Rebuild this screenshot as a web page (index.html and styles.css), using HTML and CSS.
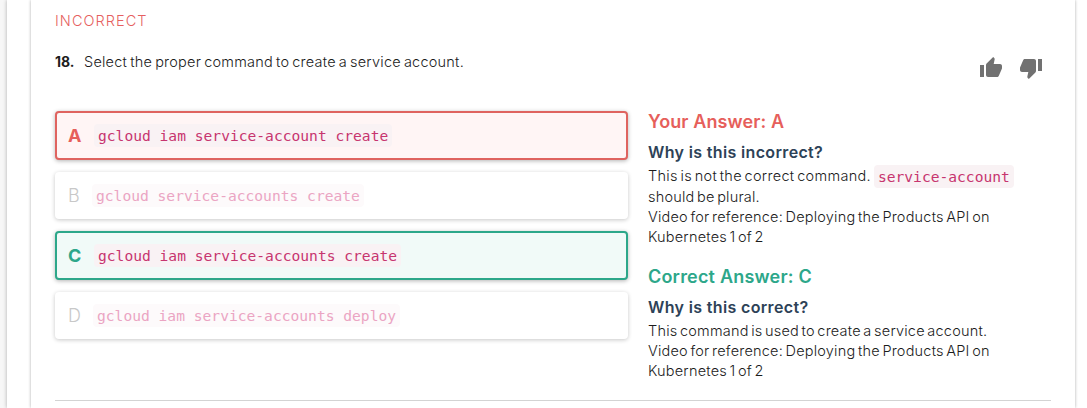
FILE: index.html
```html
<!DOCTYPE html>
<html lang="en">
<head>
<meta charset="utf-8">
<title>Quiz review</title>
<link rel="stylesheet" href="styles.css">
</head>
<body>
<div class="page">
  <main class="card">
    <section class="question">
      <div class="status">INCORRECT</div>
      <header class="prompt">
        <b class="number">18.</b>
        <p class="prompt-text">Select the proper command to create a service account.</p>
        <div class="votes">
          <svg class="vote" viewBox="0 0 24 24"><path d="M1 21h4V9H1v12zm22-11c0-1.1-.9-2-2-2h-6.310l.95-4.570.03-.320c0-.41-.17-.79-.44-1.060L14.170 1 7.590 7.590C7.220 7.950 7 8.450 7 9v10c0 1.100.9 2 2 2h9c.83 0 1.540-.5 1.840-1.220l3.020-7.050c.09-.23.14-.47.14-.73v-2z"/></svg>
          <svg class="vote" viewBox="0 0 24 24"><path d="M15 3H6c-.83 0-1.540.5-1.840 1.220l-3.020 7.050c-.09.23-.14.47-.14.73v2c0 1.100.9 2 2 2h6.310l-.95 4.570-.03.320c0 .41.17.79.44 1.060L9.830 23l6.590-6.590c.36-.36.58-.86.58-1.410V5c0-1.100-.9-2-2-2zm4 0v12h4V3h-4z"/></svg>
        </div>
      </header>
      <div class="columns">
        <div class="options">
          <div class="option wrong"><span class="letter">A</span><code>gcloud iam service-account create</code></div>
          <div class="option muted"><span class="letter letter-b">B</span><code>gcloud service-accounts create</code></div>
          <div class="option right"><span class="letter">C</span><code>gcloud iam service-accounts create</code></div>
          <div class="option muted"><span class="letter">D</span><code>gcloud iam service-accounts deploy</code></div>
        </div>
        <aside class="explanations">
          <section class="explanation">
            <h2 class="yours">Your Answer: A</h2>
            <h3>Why is this incorrect?</h3>
            <p class="line tall"><span class="lead">This is not the correct command.</span><code>service-account</code></p>
            <p class="line short">should be plural.</p>
            <p class="line">Video for reference: Deploying the Products API on</p>
            <p class="line">Kubernetes 1 of 2</p>
          </section>
          <section class="explanation">
            <h2 class="correct">Correct Answer: C</h2>
            <h3>Why is this correct?</h3>
            <p class="line">This command is used to create a service account.</p>
            <p class="line">Video for reference: Deploying the Products API on</p>
            <p class="line">Kubernetes 1 of 2</p>
          </section>
        </aside>
      </div>
    </section>
  </main>
</div>
</body>
</html>
```
FILE: styles.css
```css
* { box-sizing: border-box; }
body { margin: 0; height: 408px; overflow: hidden; background: #f7f7f7; font-family: Inter, "Liberation Sans", sans-serif; font-weight: 300; color: #1c1c1c; }
h2, h3, p { margin: 0; white-space: nowrap; }
.page { height: 408px; margin-left: 7px; padding: 0 11px 0 24px; background: #fff; box-shadow: 0 0 4px rgba(0,0,0,.3); }
.card { height: 408px; width: 1044px; padding: 0 24px; background: #fff; box-shadow: 0 0 3px rgba(0,0,0,.32); }
.question { height: 401px; border-bottom: 1px solid #d3d3d3; }
.status { padding-top: 11px; height: 51px; font-size: 14.500px; line-height: 20px; letter-spacing: 1.050px; color: #e65f60; }
.prompt { display: flex; height: 60px; font-size: 14.500px; line-height: 22px; }
.number { width: 29px; font-weight: 700; font-size: 14px; }
.prompt-text { letter-spacing: .220px; word-spacing: -1.250px; }
.votes { display: flex; gap: 16px; margin: 5px 8.500px 0 auto; }
.vote { width: 24px; height: 24px; fill: #717171; }
.columns { display: flex; gap: 20px; }
.options { display: flex; flex-direction: column; gap: 11px; width: 573px; }
.option { display: flex; align-items: center; height: 49px; padding: 0 11px; border: 2px solid transparent; border-radius: 4px; background: #fff; box-shadow: 0 1px 4px rgba(0,0,0,.3); }
.letter { width: 26px; font-size: 18px; font-weight: 700; }
code { padding: 3px 4px; border-radius: 4px; background: #f9f2f4; color: #c7356f; font: 400 14.620px/17px "DejaVu Sans Mono", monospace; }
.wrong { border-color: #df635f; background: #fff5f5; }
.wrong .letter { color: #e65f5b; }
.right { border-color: #2da78a; background: #f1faf8; }
.right .letter { color: #2da78a; }
.muted { height: 47px; margin: 1px 0; box-shadow: 0 1px 4px rgba(0,0,0,.22); }
.muted .letter { width: 25px; color: #c8c8c8; font-weight: 300; }
.muted .letter-b { width: 24px; }
.muted code { background: #fdfafb; color: #eba5c3; }
h2 { font-size: 18px; line-height: 22px; font-weight: 600; letter-spacing: .2px; margin-bottom: 9px; }
h3 { font-size: 16px; line-height: 20px; font-weight: 600; letter-spacing: .350px; color: #2d4257; margin-bottom: 4px; }
.yours { color: #e65f5b; letter-spacing: .1px; }
.correct { color: #2da78a; }
.explanation { height: 155px; }
.line { font-size: 14.500px; line-height: 20px; letter-spacing: .2px; word-spacing: -1.700px; }
.tall { display: flex; align-items: center; height: 22px; margin-top: -1px; }
.tall code { margin-left: 4px; letter-spacing: 0; word-spacing: 0; }
.lead { letter-spacing: .3px; margin-right: -1px; }
.short { letter-spacing: .2px; }
```
